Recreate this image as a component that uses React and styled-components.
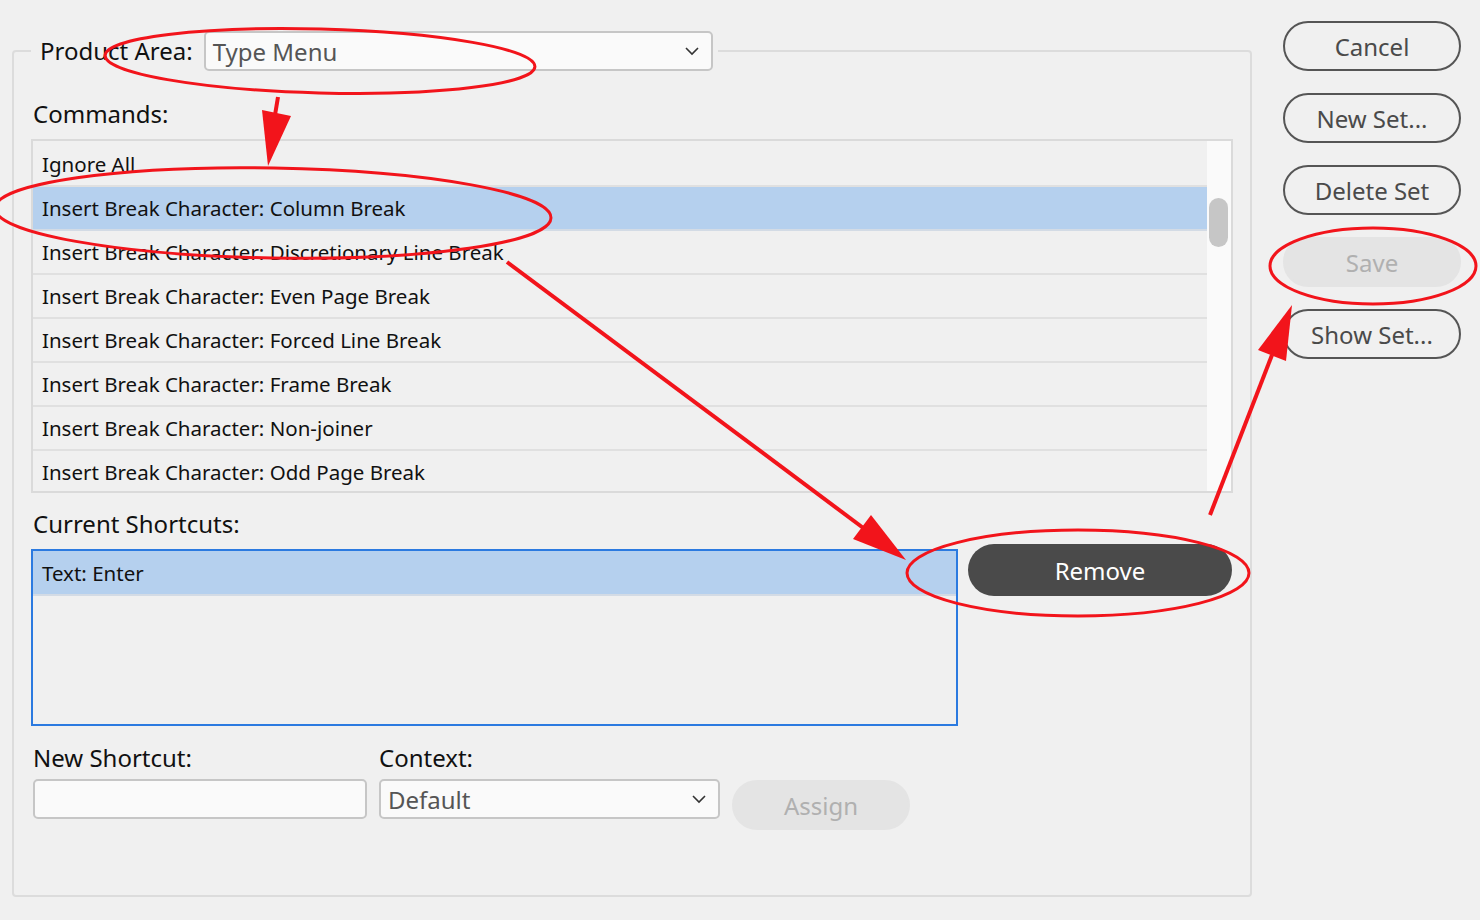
import styled, { createGlobalStyle } from "styled-components";

const GlobalStyle = createGlobalStyle`
  html, body {
    margin: 0;
    padding: 0;
    background: #f0f0f0;
  }
  * {
    box-sizing: border-box;
  }
  body {
    font-family: "Noto Sans", "Open Sans", sans-serif;
    color: #111;
  }
`;

const Page = styled.div`
  position: relative;
  display: flex;
  align-items: flex-start;
  width: 1480px;
  height: 920px;
  overflow: hidden;
`;

const Group = styled.fieldset`
  width: 1240px;
  height: 866px;
  margin: 31px 0 0 12px;
  padding: 0 17px;
  border: 2px solid #dcdcdc;
  border-radius: 4px;
  min-width: 0;
`;

const Legend = styled.legend`
  padding: 0 5px 0 9px;
`;

const LegendRow = styled.div`
  display: flex;
  align-items: center;
  gap: 11px;
`;

const Label = styled.div`
  font-size: 24px;
  line-height: 30px;
  color: #111;
  padding-left: ${(p) => p.$indent || 0}px;
  margin-top: ${(p) => p.$top || 0}px;
`;

const Select = styled.div`
  display: flex;
  align-items: center;
  justify-content: space-between;
  width: ${(p) => p.$width}px;
  height: 40px;
  padding: 0 12px 0 7px;
  background: #fafafa;
  border: 2px solid #c6c6c6;
  border-radius: 5px;
  font-size: 24px;
  color: #555;
`;

const Chevron = () => (
  <svg width="14" height="9" viewBox="0 0 14 9">
    <polyline points="1,1 7,7 13,1" fill="none" stroke="#333" strokeWidth="1.6" />
  </svg>
);

const ListBox = styled.div`
  display: grid;
  grid-template-columns: 1fr 24px;
  height: 354px;
  margin-top: 10px;
  border: 2px solid #dadada;
  overflow: hidden;
`;

const Rows = styled.div`
  display: flex;
  flex-direction: column;
  padding-top: 2px;
`;

const Row = styled.div`
  flex: 0 0 44px;
  display: flex;
  align-items: center;
  padding-left: 9px;
  font-size: 20.5px;
  color: #111;
  background: ${(p) => (p.$selected ? "#b5d0ee" : "#f0f0f0")};
  border-bottom: 2px solid ${(p) => (p.$selected ? "#d3dbe5" : "#e0e0e0")};
`;

const Track = styled.div`
  background: #fafafa;
  padding: 57px 3px 0 2px;
`;

const Thumb = styled.div`
  height: 49px;
  border-radius: 10px;
  background: #c6c6c6;
`;

const ShortcutRow = styled.div`
  display: flex;
  align-items: flex-start;
  gap: 10px;
  margin-top: 5px;
`;

const ShortcutList = styled.div`
  width: 927px;
  height: 177px;
  margin-top: 5px;
  border: 2px solid #2b7ae0;
  display: flex;
  flex-direction: column;
`;

const ShortRow = styled(Row)`
  flex: 0 0 45px;
`;

const DarkButton = styled.button`
  width: 264px;
  height: 52px;
  border: none;
  border-radius: 26px;
  background: #4a4a4a;
  color: #fff;
  font-family: "Noto Sans", "Open Sans", sans-serif;
  font-size: 24px;
`;

const FieldGrid = styled.div`
  display: grid;
  grid-template-columns: 334px 341px 178px;
  column-gap: 12px;
  row-gap: 6px;
  align-items: start;
  margin-top: 17px;
  padding-left: 2px;
`;

const TextInput = styled.div`
  height: 40px;
  background: #fafafa;
  border: 2px solid #c6c6c6;
  border-radius: 5px;
`;

const PillButton = styled.button`
  width: 178px;
  height: 50px;
  border-radius: 25px;
  font-family: "Noto Sans", "Open Sans", sans-serif;
  font-size: 24px;
  border: 2px solid ${(p) => (p.disabled ? "#e4e4e4" : "#555")};
  background: ${(p) => (p.disabled ? "#e4e4e4" : "transparent")};
  color: ${(p) => (p.disabled ? "#b0b0b0" : "#4a4a4a")};
  margin-top: ${(p) => p.$top || 0}px;
`;

const SideColumn = styled.div`
  display: flex;
  flex-direction: column;
  gap: 22px;
  margin-left: 31px;
  padding-top: 21px;
`;

const Overlay = styled.svg`
  position: absolute;
  inset: 0;
  pointer-events: none;
`;

const commands = [
  "Ignore All",
  "Insert Break Character: Column Break",
  "Insert Break Character: Discretionary Line Break",
  "Insert Break Character: Even Page Break",
  "Insert Break Character: Forced Line Break",
  "Insert Break Character: Frame Break",
  "Insert Break Character: Non-joiner",
  "Insert Break Character: Odd Page Break",
];

const sideButtons = [
  { label: "Cancel" },
  { label: "New Set..." },
  { label: "Delete Set" },
  { label: "Save", disabled: true },
  { label: "Show Set..." },
];

function Annotations() {
  const red = "#f2141b";
  return (
    <Overlay width="1480" height="920" viewBox="0 0 1480 920">
      <g fill="none" stroke={red} strokeWidth="3">
        <ellipse cx="320" cy="61" rx="215" ry="32" transform="rotate(1.5 320 61)" />
        <ellipse cx="273" cy="213" rx="278" ry="45" transform="rotate(1 273 213)" />
        <ellipse cx="1078" cy="573" rx="171" ry="43" />
        <ellipse cx="1373" cy="266" rx="103" ry="38" />
        <line x1="278" y1="97" x2="275" y2="115" strokeWidth="4" />
        <line x1="507" y1="262" x2="866" y2="530" strokeWidth="4" />
        <line x1="1210" y1="515" x2="1272" y2="355" strokeWidth="4" />
      </g>
      <g fill={red}>
        <polygon points="262,110 291,116 268,166" />
        <polygon points="853,539 871,515 906,560" />
        <polygon points="1286,361 1258,350 1292,305" />
      </g>
    </Overlay>
  );
}

export default function App() {
  return (
    <Page>
      <GlobalStyle />
      <Group>
        <Legend>
          <LegendRow>
            <Label>Product Area:</Label>
            <Select $width={509}>
              <span>Type Menu</span>
              <Chevron />
            </Select>
          </LegendRow>
        </Legend>

        <Label $top={28} $indent={2}>Commands:</Label>
        <ListBox>
          <Rows>
            {commands.map((c, i) => (
              <Row key={c} $selected={i === 1}>
                {c}
              </Row>
            ))}
          </Rows>
          <Track>
            <Thumb />
          </Track>
        </ListBox>

        <Label $top={16} $indent={2}>Current Shortcuts:</Label>
        <ShortcutRow>
          <ShortcutList>
            <ShortRow $selected>Text: Enter</ShortRow>
          </ShortcutList>
          <DarkButton>Remove</DarkButton>
        </ShortcutRow>

        <FieldGrid>
          <Label>New Shortcut:</Label>
          <Label>Context:</Label>
          <div />
          <TextInput />
          <Select $width={341}>
            <span>Default</span>
            <Chevron />
          </Select>
          <PillButton disabled $top={1}>
            Assign
          </PillButton>
        </FieldGrid>
      </Group>

      <SideColumn>
        {sideButtons.map((b) => (
          <PillButton key={b.label} disabled={b.disabled}>
            {b.label}
          </PillButton>
        ))}
      </SideColumn>

      <Annotations />
    </Page>
  );
}
